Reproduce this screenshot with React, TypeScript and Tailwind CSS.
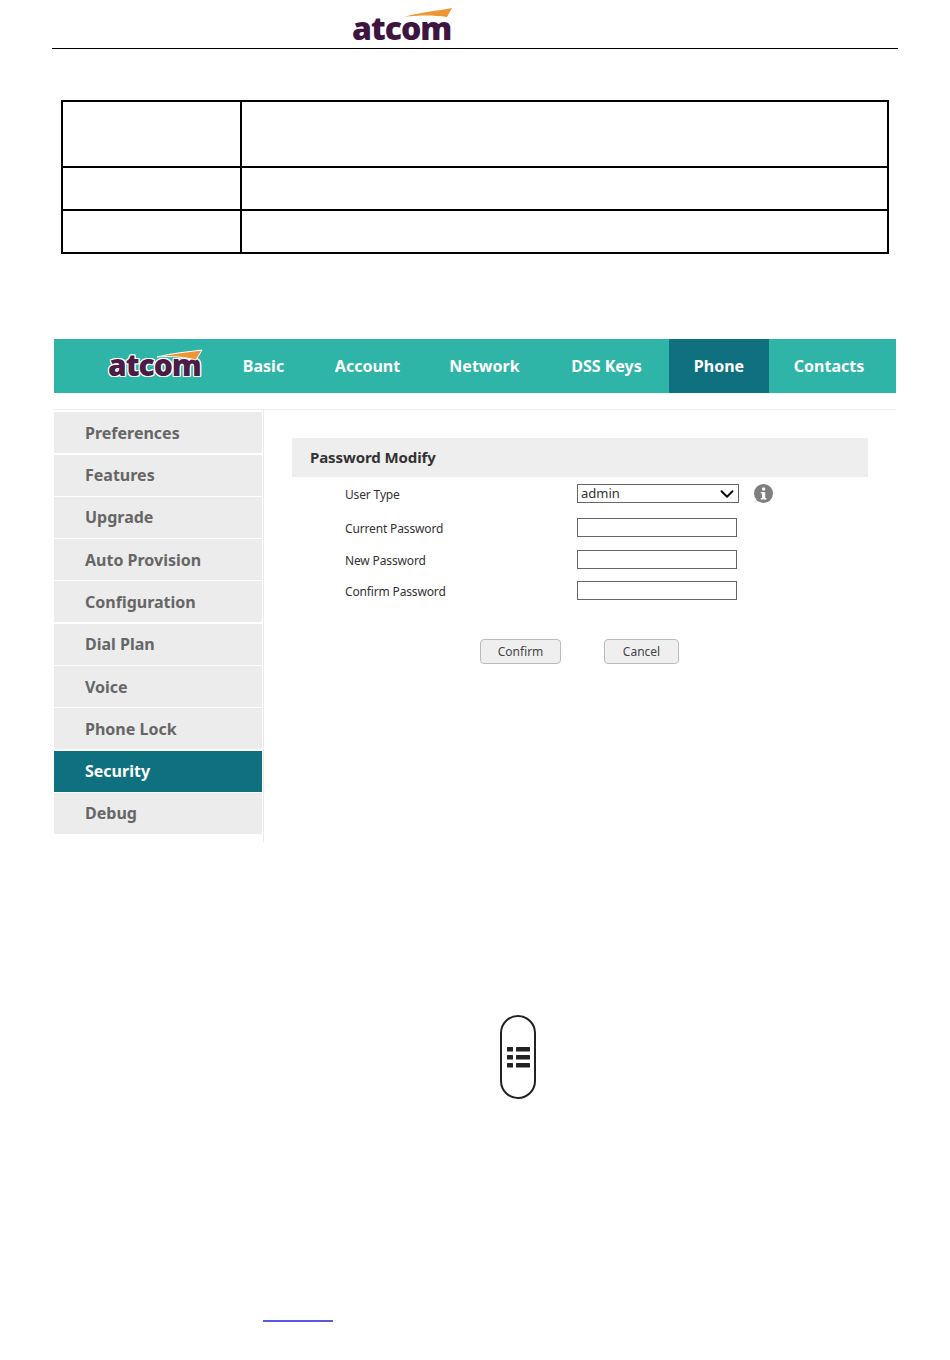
import React from 'react';
import { ChevronDown } from 'lucide-react';

const tabs = [
  { name: 'Basic', width: 'w-[93px]' },
  { name: 'Account', width: 'w-[115px]' },
  { name: 'Network', width: 'w-[119px]' },
  { name: 'DSS Keys', width: 'w-[125px]' },
  { name: 'Phone', width: 'w-[100px]' },
  { name: 'Contacts', width: 'w-[120px]' },
];
const sideItems = ['Preferences', 'Features', 'Upgrade', 'Auto Provision', 'Configuration', 'Dial Plan', 'Voice', 'Phone Lock', 'Security', 'Debug'];

const PageLogo: React.FC = () => (
  <div className="relative h-[34px] w-[100px]">
    <span className="block text-[32px] leading-[34px] font-extrabold tracking-[-1px] text-[#3e1541] font-['Open_Sans',sans-serif]">atcom</span>
    <svg className="absolute left-[50px] top-[-3px] h-[14px] w-[52px]" viewBox="0 0 52 14">
      <path d="M2 9 C18 4 36 3 50 0 L45 9 C32 7 16 7 2 9 Z" fill="#ee9633" />
    </svg>
  </div>
);

const NavLogo: React.FC = () => (
  <div className="relative h-[34px] w-[96px]">
    <span className="block text-[30px] leading-[34px] font-extrabold tracking-[-1px] text-[#4b1c45] font-['Open_Sans',sans-serif] [text-shadow:1px_0_0_#fff,-1px_0_0_#fff,0_1px_0_#fff,0_-1px_0_#fff,1px_1px_0_#fff,-1px_-1px_0_#fff,1px_-1px_0_#fff,-1px_1px_0_#fff]">atcom</span>
    <svg className="absolute left-[48px] top-[1px] h-[13px] w-[48px]" viewBox="0 0 48 13">
      <path d="M1 8 C16 4 32 3 46 1 L40 11 C30 8 14 7 1 8 Z" fill="#ee9633" stroke="#fff" strokeWidth="1" />
    </svg>
  </div>
);

const Row: React.FC<{ label: string; className: string; children: React.ReactNode }> = ({ label, className, children }) => (
  <div className={`flex items-center ${className}`}>
    <span className="w-[285px] pl-[53px] pt-[1px] text-[12px] leading-[19px] tracking-[-0.15px] text-[#333] shrink-0 whitespace-nowrap">{label}</span>
    {children}
  </div>
);

const TextBox: React.FC = () => (
  <div className="h-[19px] w-[160px] border border-[#666] bg-white" />
);

export default function App() {
  return (
    <div className="w-[950px] h-[1360px] overflow-hidden bg-white font-['Noto_Sans',sans-serif]">
      {/* page header */}
      <div className="mx-[52px] h-[49px] border-b border-black pt-[11px] pl-[300px]">
        <PageLogo />
      </div>

      {/* empty table */}
      <div className="mx-[61px] mt-[51px] w-[828px] border-2 border-black border-b-2">
        <div className="grid grid-cols-[179px_1fr] h-[66px] border-b-2 border-black">
          <div className="border-r-2 border-black" />
          <div />
        </div>
        <div className="grid grid-cols-[179px_1fr] h-[43px] border-b-2 border-black">
          <div className="border-r-2 border-black" />
          <div />
        </div>
        <div className="grid grid-cols-[179px_1fr] h-[41px]">
          <div className="border-r-2 border-black" />
          <div />
        </div>
      </div>

      {/* web ui screenshot */}
      <div className="mx-[54px] mt-[85px] w-[842px]">
        <div className="flex h-[54px] bg-[#2fb5a8]">
          <div className="w-[163px] pl-[54px] pt-[9px]">
            <NavLogo />
          </div>
          {tabs.map((tab) => (
            <div
              key={tab.name}
              className={`flex items-center justify-center text-[16px] font-bold text-white whitespace-nowrap ${tab.width} ${tab.name === 'Phone' ? 'bg-[#0f7180]' : ''}`}
            >
              {tab.name}
            </div>
          ))}
        </div>

        <div className="mt-[16px] flex border-t border-[#eeeeee]">
          <div className="w-[210px] h-[432px] border-r border-[#ebebeb] pt-[2.3px] shrink-0">
            {sideItems.map((item) => (
              <div
                key={item}
                className={`flex h-[41px] mb-[1.3px] w-[208px] items-center pl-[31px] text-[16px] font-bold ${item === 'Security' ? 'bg-[#0f7180] text-white' : 'bg-[#ececec] text-[#666666]'}`}
              >
                {item}
              </div>
            ))}
          </div>

          <div className="flex-1 pl-[28px] pt-[28px]">
            <div className="flex h-[39px] w-[576px] items-center bg-[#eeeeee] pl-[18px] text-[15px] font-bold tracking-[-0.1px] text-[#333]">
              Password Modify
            </div>

            <Row label="User Type" className="mt-[7px] h-[19px]">
              <div className="flex h-[19px] w-[162px] items-center justify-between border border-[#666] pl-[3px] text-[13px] text-[#333]">
                admin
                <ChevronDown size={22} strokeWidth={2} className="text-black" />
              </div>
              <svg className="ml-[15px]" width="19" height="19" viewBox="0 0 19 19">
                <circle cx="9.5" cy="9.5" r="9.5" fill="#7f7f7f" />
                <rect x="8" y="3.5" width="3.2" height="3" rx="1" fill="#fff" />
                <path d="M6.8 8h4.4v6h1.2v1.6H6.8V14H8v-4.4H6.8z" fill="#fff" />
              </svg>
            </Row>
            <Row label="Current Password" className="mt-[15px] h-[19px]">
              <TextBox />
            </Row>
            <Row label="New Password" className="mt-[13px] h-[19px]">
              <TextBox />
            </Row>
            <Row label="Confirm Password" className="mt-[12px] h-[19px]">
              <TextBox />
            </Row>

            <div className="mt-[39px] flex pl-[188px]">
              <div className="flex h-[25px] w-[81px] items-center justify-center rounded-[4px] border border-[#bbbbbb] bg-[#efefef] text-[12px] text-[#444]">
                Confirm
              </div>
              <div className="ml-[43px] flex h-[25px] w-[75px] items-center justify-center rounded-[4px] border border-[#bbbbbb] bg-[#efefef] text-[12px] text-[#444]">
                Cancel
              </div>
            </div>
          </div>
        </div>
      </div>

      {/* phone key */}
      <div className="ml-[500px] mt-[173px] flex h-[84px] w-[36px] items-center justify-center rounded-[18px] border-2 border-[#222]">
        <svg width="24" height="21" viewBox="0 0 24 21">
          <rect x="1" y="0" width="6" height="4.5" rx="0.5" fill="#222" />
          <rect x="10" y="0" width="14" height="4.5" rx="0.5" fill="#222" />
          <rect x="1" y="8" width="6" height="4.5" rx="0.5" fill="#222" />
          <rect x="10" y="8" width="14" height="4.5" rx="0.5" fill="#222" />
          <rect x="1" y="16" width="6" height="4.5" rx="0.5" fill="#222" />
          <rect x="10" y="16" width="14" height="4.5" rx="0.5" fill="#222" />
        </svg>
      </div>

      {/* link underline */}
      <div className="ml-[263px] mt-[221px] h-[2px] w-[70px] bg-[#5a5ae0]" />
    </div>
  );
}
